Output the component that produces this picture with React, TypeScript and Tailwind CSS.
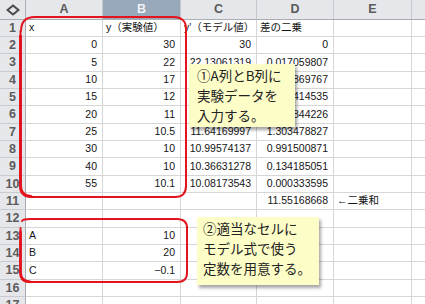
import React from "react";

type Align = "l" | "r";
type Cell = { t: string; a?: Align } | null;

const COLS = ["A", "B", "C", "D", "E"];
const COL_W = ["w-[77px]", "w-[78px]", "w-[76px]", "w-[77px]", "w-[78px]"];
const ROW_H = [
  "h-[17px]", "h-[17px]", "h-[18px]", "h-[17px]", "h-[17px]", "h-[18px]",
  "h-[17px]", "h-[17px]", "h-[18px]", "h-[17px]", "h-[17px]", "h-[18px]",
  "h-[17px]", "h-[17px]", "h-[18px]", "h-[17px]", "h-[17px]",
];

const r = (t: string): Cell => ({ t, a: "r" });
const l = (t: string): Cell => ({ t, a: "l" });

const ROWS: Cell[][] = [
  [l("x"), l("y（実験値）"), l("y'（モデル値）"), l("差の二乗"), null],
  [r("0"), r("30"), r("30"), r("0"), null],
  [r("5"), r("22"), r("22.13061319"), r("0.017059807"), null],
  [r("10"), r("17"), r("17.35758882"), r("0.127869767"), null],
  [r("15"), r("12"), r("14.4626032"), r("6.064414535"), null],
  [r("20"), r("11"), r("12.70670566"), r("2.912844226"), null],
  [r("25"), r("10.5"), r("11.64169997"), r("1.303478827"), null],
  [r("30"), r("10"), r("10.99574137"), r("0.991500871"), null],
  [r("40"), r("10"), r("10.36631278"), r("0.134185051"), null],
  [r("55"), r("10.1"), r("10.08173543"), r("0.000333595"), null],
  [null, null, null, r("11.55168668"), l("←二乗和")],
  [null, null, null, null, null],
  [l("A"), r("10"), null, null, null],
  [l("B"), r("20"), null, null, null],
  [l("C"), r("−0.1"), null, null, null],
  [null, null, null, null, null],
  [null, null, null, null, null],
];

const cellFont = { fontFamily: '"Liberation Sans", "Noto Sans CJK JP", sans-serif' };
const noteFont = { fontFamily: '"Noto Sans CJK JP", "Liberation Sans", sans-serif' };

function CornerDiamond() {
  return (
    <svg width="14" height="12" viewBox="0 0 14 12">
      <path d="M7 1.5 L12.5 6 L7 10.5 L1.5 6 Z" fill="none" stroke="#4a4a4a" strokeWidth="2" strokeLinejoin="miter" />
    </svg>
  );
}

function HeaderRow() {
  return (
    <div className="flex h-[20px] border-b border-[#a9acb1] bg-[#e5e7ea]">
      <div className="flex w-[26px] shrink-0 items-center justify-center border-r border-[#a9acb1]">
        <CornerDiamond />
      </div>
      {COLS.map((c, i) => (
        <div
          key={c}
          className={`${COL_W[i]} flex shrink-0 items-center justify-center border-r border-[#c6c9cd] text-[12.5px] font-bold ${
            c === "B" ? "bg-[#98a8bb] text-[#eef1f5]" : "text-[#5a5a5a]"
          }`}
          style={cellFont}
        >
          {c}
        </div>
      ))}
      <div className="flex-1" />
    </div>
  );
}

function DataRow({ n, cells, h }: { n: number; cells: Cell[]; h: string }) {
  return (
    <div className={`flex ${h}`}>
      <div
        className="flex w-[26px] shrink-0 items-center justify-center border-b border-r border-b-[#c8cbcf] border-r-[#a9acb1] bg-[#e5e7ea] text-[12.5px] font-bold text-[#5c5c5c]"
        style={cellFont}
      >
        {n}
      </div>
      {cells.map((c, i) => (
        <div
          key={i}
          className={`${COL_W[i]} flex shrink-0 items-center overflow-visible whitespace-nowrap border-b border-r border-[#d6d6d6] text-[10.5px] text-[#151515] ${
            c?.a === "r" ? "justify-end pr-[5px]" : "justify-start pl-[3px]"
          }`}
          style={cellFont}
        >
          {c?.t ?? ""}
        </div>
      ))}
      <div className="flex-1 border-b border-[#d6d6d6]" />
    </div>
  );
}

function Note({ lines, className }: { lines: string[]; className: string }) {
  return (
    <div
      className={`absolute bg-[#fdfdc8] text-[13.5px] leading-[20px] text-[#222] shadow-[2px_3px_3px_rgba(0,0,0,0.35)] ${className}`}
      style={noteFont}
    >
      {lines.map((s) => (
        <div key={s} className="whitespace-nowrap">
          {s}
        </div>
      ))}
    </div>
  );
}

function Marks() {
  return (
    <svg className="pointer-events-none absolute left-0 top-0" width="425" height="304" viewBox="0 0 425 304">
      <g fill="none" stroke="#e3141e" strokeLinecap="round" strokeLinejoin="round">
        <path
          d="M21 31 C21 22 26 17 35 17 L174 17 C181 17 186 21 186 28 L186 186 C186 193 182 197 175 197 L32 197 C25 197 20.5 193 20.5 185 L20.5 31"
          strokeWidth="2"
        />
        <path d="M20.5 36 L20.5 186 C20.5 192 24 196 31 196.5" strokeWidth="3" />
        <path
          d="M22 221 C23 219.5 25 219 30 219 L177 219 C183 219 187 222 187 228 L187 273 C187 279 183 282 177 282 L30 282 C24 282 20.5 279 20.5 273 L20.5 228"
          strokeWidth="2"
        />
        <path d="M20.5 232 L20.5 273 C20.5 279 24 281.5 30 281.8" strokeWidth="2.8" />
      </g>
    </svg>
  );
}

export default function App() {
  return (
    <div className="relative h-[304px] w-[425px] overflow-hidden bg-white">
      <HeaderRow />
      {ROWS.map((cells, i) => (
        <DataRow key={i} n={i + 1} cells={cells} h={ROW_H[i]} />
      ))}
      <Marks />
      <Note
        className="left-[189px] top-[64px] h-[63px] w-[106px] pl-[8px] pt-[1px]"
        lines={["①A列とB列に", "実験データを", "入力する。"]}
      />
      <Note
        className="left-[197px] top-[217px] h-[68px] w-[122px] pl-[6px] pt-[1px]"
        lines={["②適当なセルに", "モデル式で使う", "定数を用意する。"]}
      />
    </div>
  );
}
